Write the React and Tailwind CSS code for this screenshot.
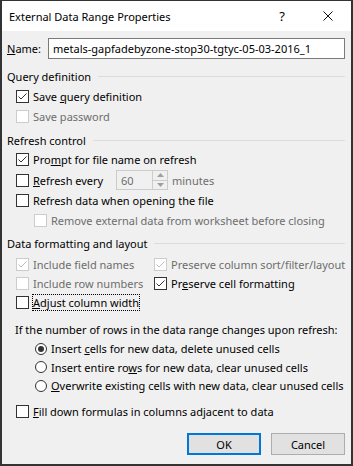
import React from "react";

const Check = ({ color }) => (
  <svg width="11" height="11" viewBox="0 0 11 11" className="absolute left-0 top-0">
    <polyline points="1.5,5.5 4,8 9.5,2.5" fill="none" stroke={color} strokeWidth="1" />
  </svg>
);

const Box = ({ checked, disabled }) => (
  <span
    className={
      disabled
        ? "relative w-[13px] h-[13px] shrink-0 border border-[#cccccc] bg-white"
        : "relative w-[13px] h-[13px] shrink-0 border border-[#333333] bg-white"
    }
  >
    {checked && <Check color={disabled ? "#bcbcbc" : "#333333"} />}
  </span>
);

const Radio = ({ on }) => (
  <span className="w-[12px] h-[12px] shrink-0 rounded-full border border-[#333333] bg-white flex items-center justify-center">
    {on && <span className="w-[6px] h-[6px] rounded-full bg-[#333333]" />}
  </span>
);

const Header = ({ children, cls }) => (
  <div className={"flex items-center h-[16px] pl-[5px] pr-[6px] " + cls}>
    <span>{children}</span>
    <div className="flex-1 h-px bg-[#dcdcdc] ml-[7px]" />
  </div>
);

const CheckRow = ({ cls, checked, disabled, children }) => (
  <div className={"flex items-center gap-[4px] " + cls}>
    <Box checked={checked} disabled={disabled} />
    <span className={disabled ? "text-[#6d6d6d]" : "text-black"}>{children}</span>
  </div>
);

const RadioRow = ({ cls, on, children }) => (
  <div className={"flex items-center gap-[4px] pl-[33px] " + cls}>
    <Radio on={on} />
    <span>{children}</span>
  </div>
);

export default function App() {
  return (
    <div className="w-[353px] h-[466px] bg-[#f0f0f0] border-[#333333] border-t border-l-2 border-r-2 border-b-2 flex flex-col text-[11px] leading-none whitespace-nowrap text-black font-['Noto_Sans',sans-serif]">
      <div className="h-[30px] bg-white flex items-center shrink-0">
        <span className="flex-1 pl-[7px]">External Data Range Properties</span>
        <span className="w-[46px] text-center text-[13px]">?</span>
        <span className="w-[46px] flex justify-center">
          <svg width="10" height="10" viewBox="0 0 10 10">
            <path d="M0.5 0.5 L9.5 9.5 M9.5 0.5 L0.5 9.5" stroke="#111" strokeWidth="1" />
          </svg>
        </span>
      </div>

      <div className="mt-[7px] h-[21px] flex items-center">
        <span className="w-[46px] pl-[5px]">
          <u>N</u>ame:
        </span>
        <div className="w-[297px] h-[21px] border border-[#7a7a7a] bg-white flex items-center pl-[4px]">
          metals-gapfadebyzone-stop30-tgtyc-05-03-2016_1
        </div>
      </div>

      <Header cls="mt-[9px]">Query definition</Header>
      <div className="pl-[14px] flex flex-col">
        <CheckRow cls="mt-[3px] h-[19px]" checked>
          Save <u>q</u>uery definition
        </CheckRow>
        <CheckRow cls="h-[20px]" disabled>
          Save password
        </CheckRow>
      </div>

      <Header cls="mt-[6px]">Refresh control</Header>
      <div className="pl-[14px] flex flex-col">
        <CheckRow cls="mt-[2px] h-[19px]" checked>
          Pro<u>m</u>pt for file name on refresh
        </CheckRow>
        <div className="h-[22px] flex items-center">
          <Box />
          <span className="ml-[4px] w-[83px]">
            <u>R</u>efresh every
          </span>
          <div className="w-[52px] h-[20px] border border-[#cccccc] bg-[#f0f0f0] flex items-stretch">
            <span className="flex-1 flex items-center pl-[4px] text-[#6d6d6d]">60</span>
            <div className="w-[15px] border-l border-[#cccccc] flex flex-col">
              <div className="flex-1 flex items-center justify-center">
                <svg width="7" height="4" viewBox="0 0 7 4">
                  <path d="M0 4 L3.5 0 L7 4 Z" fill="#a0a0a0" />
                </svg>
              </div>
              <div className="h-px bg-[#cccccc]" />
              <div className="flex-1 flex items-center justify-center">
                <svg width="7" height="4" viewBox="0 0 7 4">
                  <path d="M0 0 L3.5 4 L7 0 Z" fill="#a0a0a0" />
                </svg>
              </div>
            </div>
          </div>
          <span className="ml-[4px] text-[#6d6d6d]">minutes</span>
        </div>
        <CheckRow cls="h-[19px]">
          Refresh data when opening the f<u>i</u>le
        </CheckRow>
        <CheckRow cls="h-[20px] pl-[18px]" disabled>
          Remove external data from worksheet before closing
        </CheckRow>
      </div>

      <Header cls="mt-[5px]">Data formatting and layout</Header>
      <div className="pl-[14px] flex flex-col">
        <div className="mt-[3px] h-[20px] flex">
          <CheckRow cls="w-[138px]" checked disabled>
            Include field names
          </CheckRow>
          <CheckRow cls="" checked disabled>
            Preserve column sort/filter/layout
          </CheckRow>
        </div>
        <div className="h-[19px] flex">
          <CheckRow cls="w-[138px]" disabled>
            Include row numbers
          </CheckRow>
          <CheckRow cls="" checked>
            Pr<u>e</u>serve cell formatting
          </CheckRow>
        </div>
        <div className="h-[18px] flex items-center">
          <Box />
          <span className="ml-[3px] h-[17px] px-[1px] flex items-center outline outline-1 outline-dotted outline-black -outline-offset-1">
            <u>A</u>djust column width
          </span>
        </div>
      </div>

      <div className="mt-[10px] h-[16px] flex items-center pl-[13px]">
        If the number of rows in the data range changes upon refresh:
      </div>
      <RadioRow cls="mt-[2px] h-[19px]" on>
        Insert <u>c</u>ells for new data, delete unused cells
      </RadioRow>
      <RadioRow cls="h-[18px]">
        Insert entire ro<u>w</u>s for new data, clear unused cells
      </RadioRow>
      <RadioRow cls="h-[19px]">
        <u>O</u>verwrite existing cells with new data, clear unused cells
      </RadioRow>

      <div className="pl-[14px]">
        <CheckRow cls="mt-[7px] h-[18px]">
          <u>F</u>ill down formulas in columns adjacent to data
        </CheckRow>
      </div>

      <div className="mt-[13px] flex justify-end gap-[10px] pr-[6px]">
        <button className="w-[74px] h-[22px] border-2 border-[#0078d7] bg-[#e1e1e1]">OK</button>
        <button className="w-[74px] h-[22px] border border-[#adadad] bg-[#e1e1e1]">Cancel</button>
      </div>
    </div>
  );
}
